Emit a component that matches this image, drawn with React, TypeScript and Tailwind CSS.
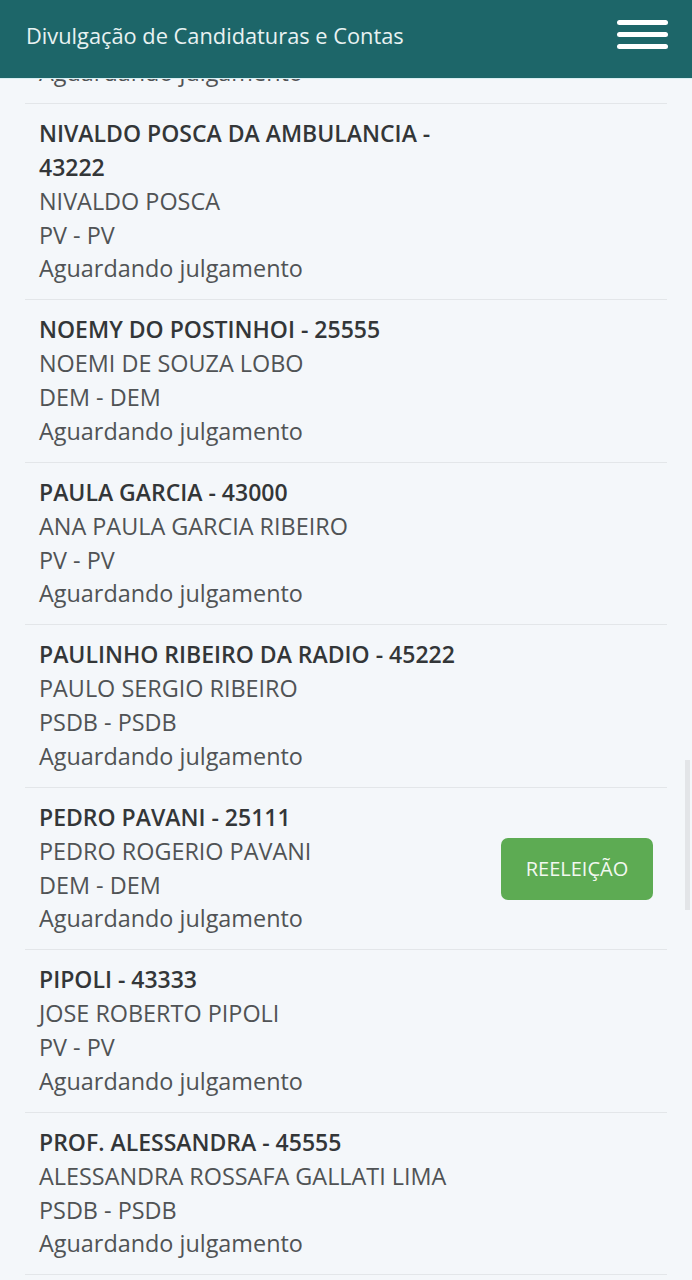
import React from 'react';

type Candidate = {
    title: string;
    name: string;
    party: string;
    status: string;
    reeleicao?: boolean;
};

const candidates: Candidate[] = [
    { title: 'NIVALDO POSCA DA AMBULANCIA - 43222', name: 'NIVALDO POSCA', party: 'PV - PV', status: 'Aguardando julgamento' },
    { title: 'NOEMY DO POSTINHOI - 25555', name: 'NOEMI DE SOUZA LOBO', party: 'DEM - DEM', status: 'Aguardando julgamento' },
    { title: 'PAULA GARCIA - 43000', name: 'ANA PAULA GARCIA RIBEIRO', party: 'PV - PV', status: 'Aguardando julgamento' },
    { title: 'PAULINHO RIBEIRO DA RADIO - 45222', name: 'PAULO SERGIO RIBEIRO', party: 'PSDB - PSDB', status: 'Aguardando julgamento' },
    { title: 'PEDRO PAVANI - 25111', name: 'PEDRO ROGERIO PAVANI', party: 'DEM - DEM', status: 'Aguardando julgamento', reeleicao: true },
    { title: 'PIPOLI - 43333', name: 'JOSE ROBERTO PIPOLI', party: 'PV - PV', status: 'Aguardando julgamento' },
    { title: 'PROF. ALESSANDRA - 45555', name: 'ALESSANDRA ROSSAFA GALLATI LIMA', party: 'PSDB - PSDB', status: 'Aguardando julgamento' },
];

const CandidateRow: React.FC<{ c: Candidate }> = ({ c }) => (
    <li className="flex items-center border-b border-[#e3e6e9] px-[14px] py-[13px]">
        <div className="flex-1 min-w-0">
            <div className="max-w-[440px] text-[23px] font-semibold leading-[33.875px] text-[#333638]">
                {c.title}
            </div>
            <div className="text-[23.4px] leading-[33.875px] text-[#505355]">{c.name}</div>
            <div className="text-[23.4px] leading-[33.875px] text-[#505355]">{c.party}</div>
            <div className="text-[23.4px] leading-[33.875px] text-[#505355]">{c.status}</div>
        </div>
        {c.reeleicao && (
            <span className="flex h-[62px] w-[152px] items-center justify-center rounded-[7px] bg-[#5dab53] text-[20px] text-[#f2f8f0]">
                REELEIÇÃO
            </span>
        )}
    </li>
);

export default function App() {
    return (
        <div
            className="relative h-[1280px] w-full overflow-hidden bg-[#f4f7fa]"
            style={{ fontFamily: '"Open Sans", "Noto Sans", sans-serif' }}
        >
            {/* fixed top bar */}
            <header className="absolute inset-x-0 top-0 z-10 flex h-[78px] items-center justify-between bg-[#1d6669] pb-[6px] pl-[26px] pr-[24px] shadow-[0_1px_0_#d8eef2]">
                <span className="text-[21.8px] text-[#e8f2f2]">Divulgação de Candidaturas e Contas</span>
                <button className="flex w-[51px] flex-col gap-[7px] pb-[3px]" aria-label="menu">
                    <span className="h-[5px] rounded-full bg-white" />
                    <span className="h-[5px] rounded-full bg-white" />
                    <span className="h-[5px] rounded-full bg-white" />
                </button>
            </header>

            {/* scrollbar thumb */}
            <div className="absolute right-[2px] top-[760px] h-[150px] w-[5px] bg-[#e3e5e8]" />

            <ul className="px-[25px] pt-[56px]">
                <li className="border-b border-[#e3e6e9] px-[14px] pb-[13px]">
                    <div className="text-[23.4px] leading-[33.875px] text-[#505355]">Aguardando julgamento</div>
                </li>
                {candidates.map((c) => (
                    <CandidateRow key={c.title} c={c} />
                ))}
            </ul>
        </div>
    );
}
